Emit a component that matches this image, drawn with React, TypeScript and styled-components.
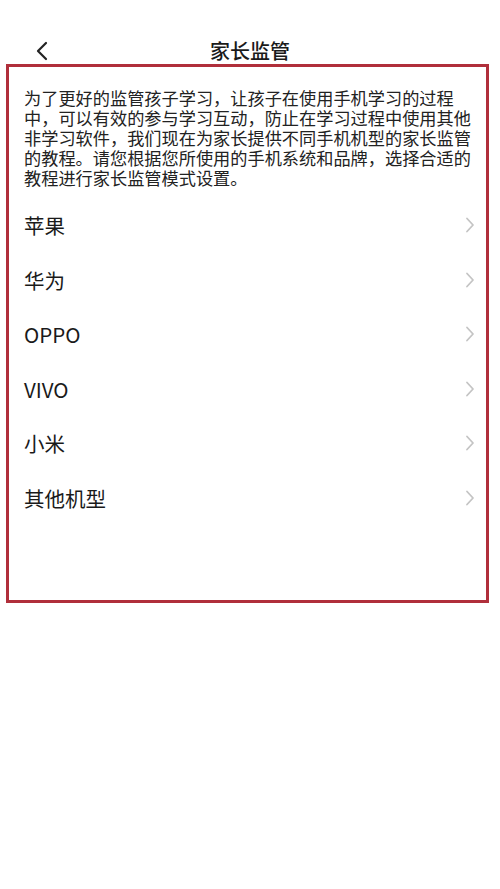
import styled, { createGlobalStyle } from "styled-components";

const GlobalStyle = createGlobalStyle`
  html, body {
    margin: 0;
    padding: 0;
    background: #ffffff;
  }
  body {
    font-family: "Noto Sans CJK SC", "Noto Sans", sans-serif;
    color: #1f1f1f;
  }
`;

const brands = ["苹果", "华为", "OPPO", "VIVO", "小米", "其他机型"];

const BackIcon = () => (
  <svg width="14" height="20" viewBox="0 0 14 20" fill="none">
    <path d="M11 2 L3 10 L11 18" stroke="#222" strokeWidth="2.2" strokeLinecap="round" strokeLinejoin="round" />
  </svg>
);

const ChevronIcon = () => (
  <svg width="10" height="16" viewBox="0 0 10 16" fill="none">
    <path d="M2 1.5 L8 8 L2 14.5" stroke="#c4c4c4" strokeWidth="1.8" strokeLinecap="round" strokeLinejoin="round" />
  </svg>
);

const App = () => {
  return (
    <>
      <GlobalStyle />
      <Page>
        <Header>
          <NavRow>
            <BackBtn>
              <BackIcon />
            </BackBtn>
            <Title>家长监管</Title>
          </NavRow>
        </Header>
        <Panel>
          <Intro>
            为了更好的监管孩子学习，让孩子在使用手机学习的过程中，可以有效的参与学习互动，防止在学习过程中使用其他非学习软件，我们现在为家长提供不同手机机型的家长监管的教程。请您根据您所使用的手机系统和品牌，选择合适的教程进行家长监管模式设置。
          </Intro>
          <BrandList>
            {brands.map((name) => (
              <BrandItem key={name}>
                <span>{name}</span>
                <ChevronIcon />
              </BrandItem>
            ))}
          </BrandList>
        </Panel>
      </Page>
    </>
  );
};

const Page = styled.div`
  width: 500px;
  min-height: 889px;
  background: #ffffff;
`;

const Header = styled.div`
  height: 64px;
  padding-top: 38px;
  box-sizing: border-box;
`;

const NavRow = styled.div`
  position: relative;
  height: 26px;
  display: flex;
  align-items: center;
  justify-content: center;
`;

const BackBtn = styled.div`
  position: absolute;
  left: 35px;
  top: 3px;
  display: flex;
`;

const Title = styled.div`
  font-size: 20px;
  font-weight: 500;
  color: #1a1a1a;
  line-height: 26px;
`;

const Panel = styled.div`
  margin: 0 11px 0 6px;
  height: 539px;
  box-sizing: border-box;
  border: 3px solid #b02f3b;
  padding: 21px 11px 0 15px;
`;

const Intro = styled.p`
  margin: 0;
  width: 452px;
  font-size: 17.2px;
  line-height: 20px;
  color: #222222;
`;

const BrandList = styled.div`
  margin-top: 10px;
  display: flex;
  flex-direction: column;
`;

const BrandItem = styled.div`
  height: 54.5px;
  display: flex;
  align-items: center;
  justify-content: space-between;
  font-size: 20.5px;
  color: #1a1a1a;
`;

export default App;
